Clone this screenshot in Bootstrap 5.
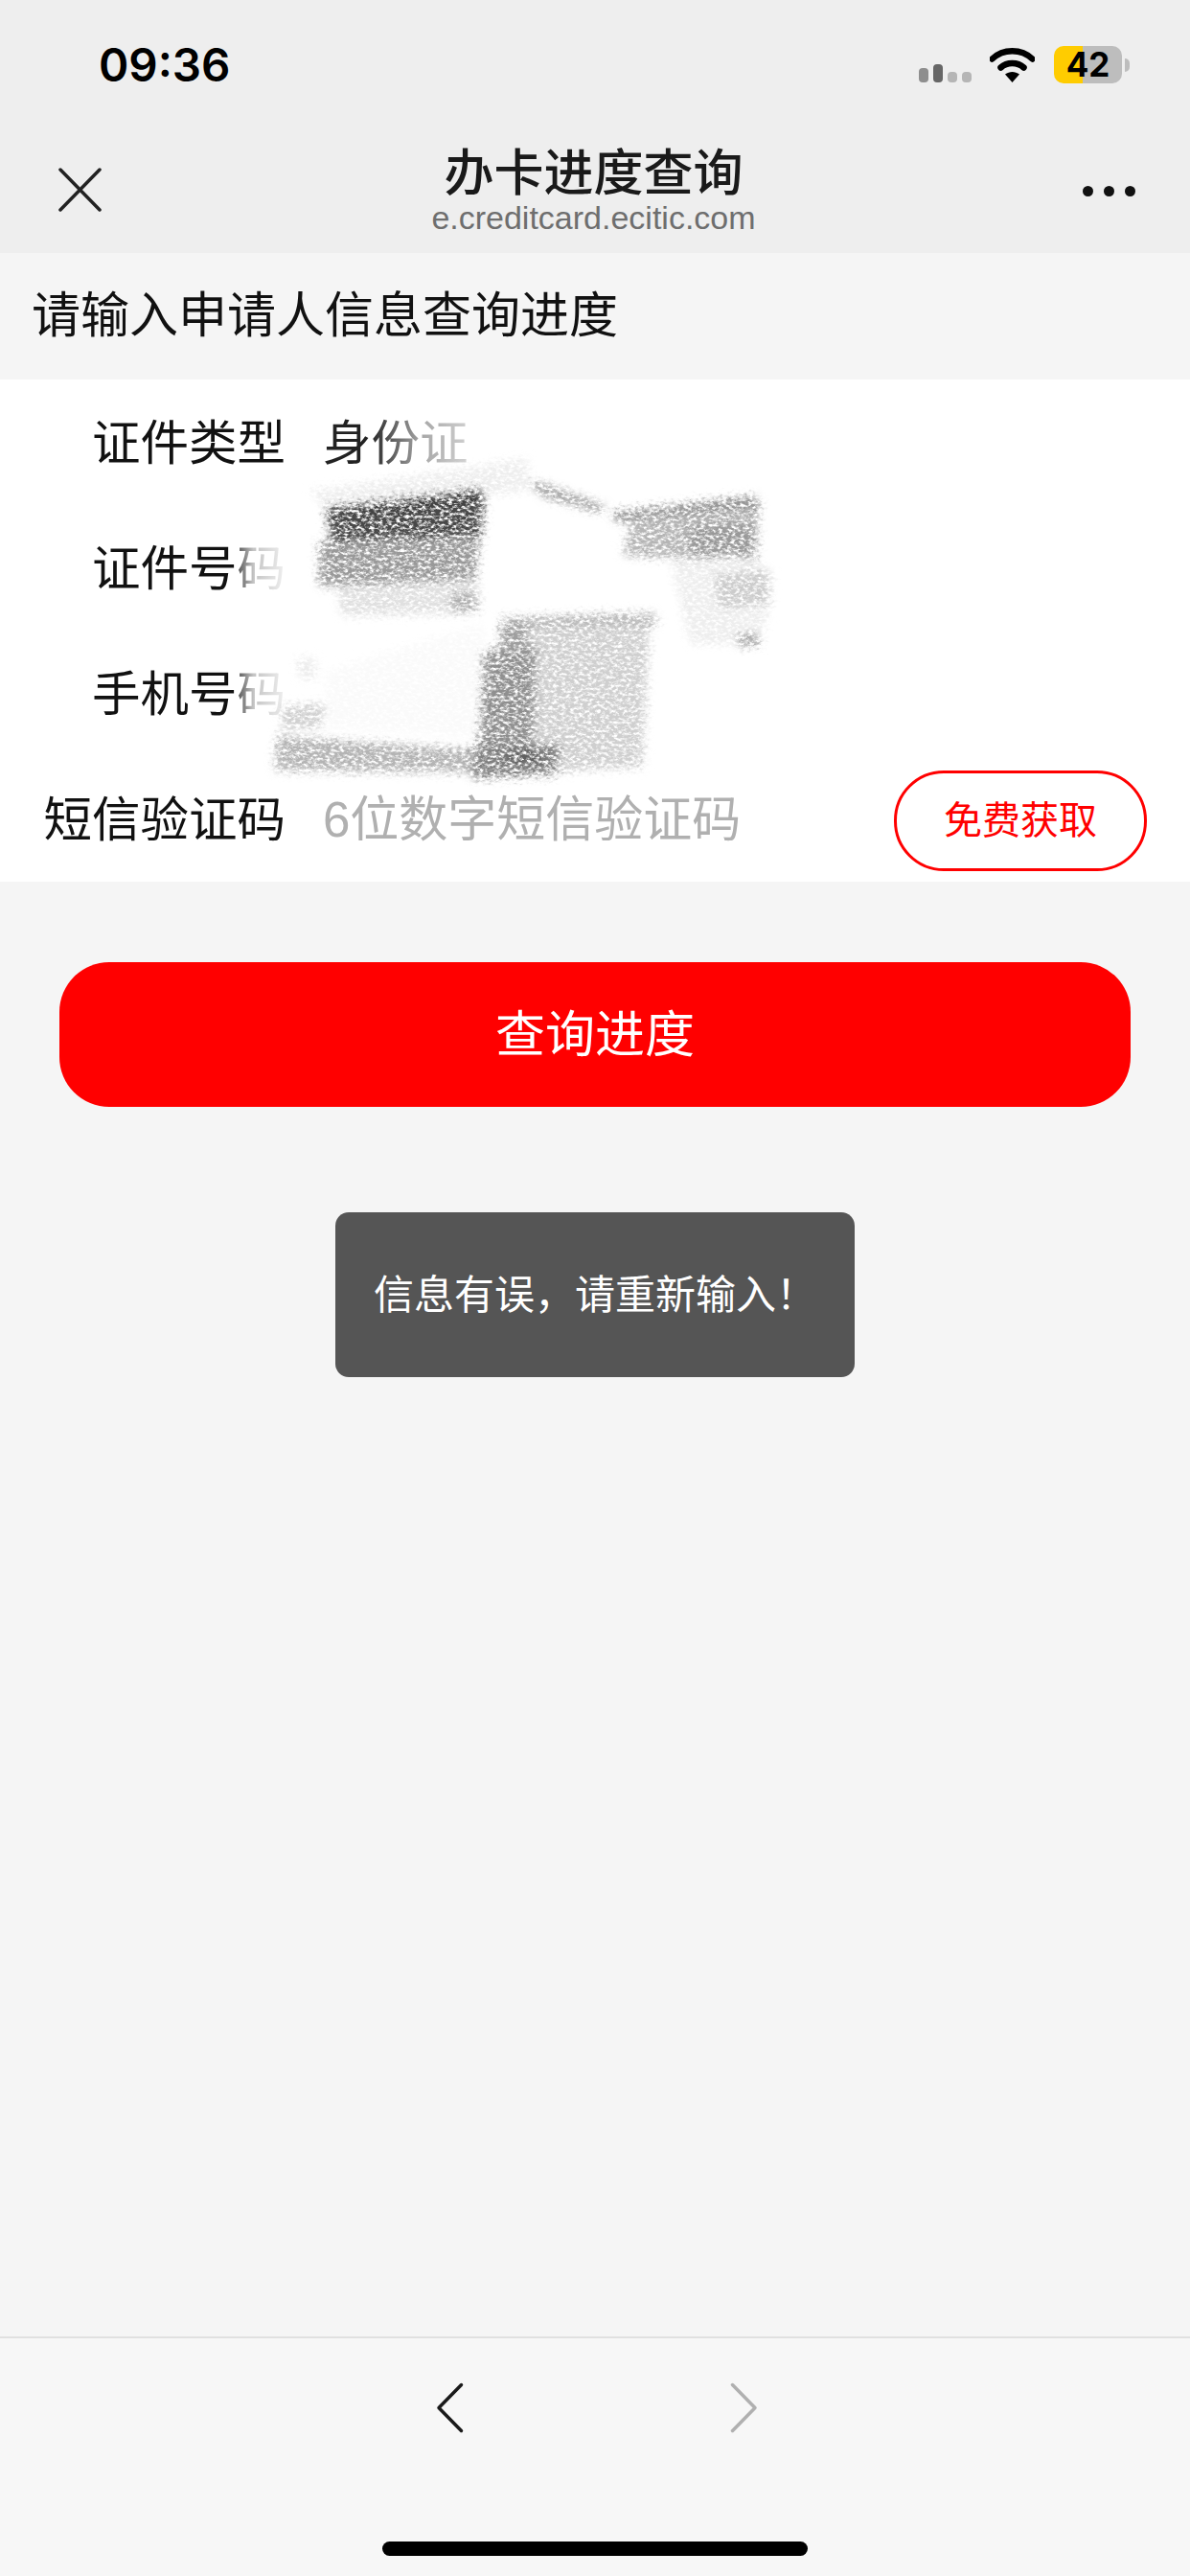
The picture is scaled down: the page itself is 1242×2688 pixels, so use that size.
<!DOCTYPE html>
<html lang="zh-CN">

<head>
    <meta charset="UTF-8">
    <meta name="viewport" content="width=device-width, initial-scale=1.0">
    <title>办卡进度查询</title>
    <link href="https://cdn.jsdelivr.net/npm/bootstrap@5.3.0/dist/css/bootstrap.min.css" rel="stylesheet">
    <style>
        body {
            width: 1242px;
            height: 2688px;
            overflow: hidden;
            background: #f5f5f5;
            font-family: "Liberation Sans", "Noto Sans CJK SC", sans-serif;
            color: #000;
        }

        .phone { height: 2688px; }

        .status-bar {
            height: 132px;
            background: #eee;
            padding: 0 63px 0 103px;
        }
        .clock {
            font: 600 47.500px/1 Inter, "Liberation Sans", sans-serif;
            margin-top: 3px;
        }
        .sig-bars { gap: 5px; height: 19px; width: 55px; margin: 21px 19px 0 0; }
        .sig-bars span { width: 10px; border-radius: 4px; }
        .sig-a { height: 15px; background: #8e8e8e; }
        .sig-b { height: 19px; background: #666; }
        .sig-c { height: 11px; background: #b5b5b5; }
        .wifi-icon { margin: 3px 20px 0 0; }
        .battery {
            width: 71px;
            height: 39px;
            border-radius: 10px;
            margin-top: 3px;
            background: linear-gradient(90deg, #fc0 30px, #bdbdbd 30px);
            font: 700 35px/39px Inter, "Liberation Sans", sans-serif;
            text-align: center;
        }
        .battery-nub { width: 5px; height: 14px; background: #bdbdbd; border-radius: 0 7px 7px 0; margin: 3px 0 0 3px; }

        .title-bar {
            height: 132px;
            background: #eee;
            padding: 0 57px 0 61px;
        }
        .title-side { width: 124px; }
        .title-middle { margin-right: 7px; }
        .page-title { font-size: 52px; font-weight: 500; line-height: 56px; color: #1a1a1a; margin-top: 2px; }
        .page-url { font-size: 34px; line-height: 36px; color: #6e6e6e; }
        .more-dots { gap: 11px; margin-top: 2px; }
        .more-dots span { width: 11px; height: 11px; border-radius: 50%; background: #111; }

        .form-hint { height: 132px; padding-left: 33px; font-size: 51px; color: #111; }

        .form-box { background: #fff; }
        .form-line { height: 131px; font-size: 50.500px; padding-top: 3px; }
        .form-label-text { width: 298px; text-align: right; flex-shrink: 0; color: #111; }
        .form-value { margin-left: 39px; color: #222; }
        .form-placeholder { margin-left: 39px; color: #b0b0b0; font-size: 51px; }
        .btn-code {
            width: 264px;
            height: 105px;
            margin-left: auto;
            margin-right: 45px;
            border: 3px solid #f00;
            border-radius: 52px;
            color: #f00;
            background: #fff;
            font-size: 40px;
        }

        .smudge { position: absolute; left: 0; top: 0; pointer-events: none; }

        .btn-query {
            display: block;
            width: 1118px;
            height: 151px;
            margin: 84px 0 0 62px;
            border: 0;
            border-radius: 52px;
            background: #f00;
            color: #fff;
            font-size: 52px;
        }
        .btn-query:hover { background: #f00; color: #fff; }

        .toast-msg {
            width: 542px;
            height: 172px;
            margin: 110px 0 0 350px;
            background: #555;
            border-radius: 14px;
            color: #fff;
            font-size: 42px;
            padding-left: 40px;
        }

        .bottom-bar {
            height: 250px;
            background: #f7f7f7;
            border-top: 2px solid #e0e0e0;
        }
        .nav-arrows { padding: 46px 0 0 454px; gap: 274px; }
        .home-line { width: 444px; height: 15px; border-radius: 8px; background: #000; margin: 113px auto 0; }
    </style>
</head>

<body>
    <div class="phone d-flex flex-column position-relative">

        <div class="status-bar d-flex align-items-center justify-content-between">
            <div class="clock">09:36</div>
            <div class="d-flex align-items-center">
                <div class="sig-bars d-flex align-items-end">
                    <span class="sig-a"></span><span class="sig-b"></span><span class="sig-c"></span><span class="sig-c"></span>
                </div>
                <svg class="wifi-icon" width="47" height="36" viewBox="0 0 47 36">
                    <path d="M2.500 11.500C14 .5 33 .5 44.500 11.500" fill="none" stroke="#000" stroke-width="6.500" stroke-linecap="round"/>
                    <path d="M11.500 20.500C18 14.500 29 14.500 35.500 20.500" fill="none" stroke="#000" stroke-width="6.500" stroke-linecap="round"/>
                    <path d="M16 27.500C20.500 24 26.500 24 31 27.500L23.500 36Z" fill="#000"/>
                </svg>
                <div class="battery">42</div>
                <div class="battery-nub"></div>
            </div>
        </div>

        <div class="title-bar d-flex justify-content-between align-items-center">
            <div class="title-side">
                <svg class="d-block" width="45" height="46" viewBox="0 0 45 46">
                    <path d="M2 2L43 44M43 2L2 44" stroke="#222" stroke-width="3.500" stroke-linecap="round"/>
                </svg>
            </div>
            <div class="title-middle text-center">
                <div class="page-title">办卡进度查询</div>
                <div class="page-url">e.creditcard.ecitic.com</div>
            </div>
            <div class="title-side d-flex justify-content-end">
                <div class="more-dots d-flex">
                    <span></span><span></span><span></span>
                </div>
            </div>
        </div>

        <div class="form-hint d-flex align-items-center">请输入申请人信息查询进度</div>

        <div class="form-box position-relative">
            <div class="form-line d-flex align-items-center">
                <div class="form-label-text">证件类型</div>
                <div class="form-value">身份证</div>
            </div>
            <div class="form-line d-flex align-items-center">
                <div class="form-label-text">证件号码</div>
            </div>
            <div class="form-line d-flex align-items-center">
                <div class="form-label-text">手机号码</div>
            </div>
            <div class="form-line d-flex align-items-center">
                <div class="form-label-text">短信验证码</div>
                <div class="form-placeholder">6位数字短信验证码</div>
                <button class="btn btn-code d-flex align-items-center justify-content-center p-0">免费获取</button>
            </div>

            <!-- pencil scribble over the personal data -->
            <svg class="smudge" width="1242" height="524" viewBox="0 396 1242 524">
                <defs>
                    <filter id="pencil" x="-5%" y="-5%" width="110%" height="110%">
                        <feGaussianBlur in="SourceGraphic" stdDeviation="4" result="b"/>
                        <feTurbulence type="fractalNoise" baseFrequency="0.22 0.34" numOctaves="3" seed="7" result="n"/>
                        <feDisplacementMap in="b" in2="n" scale="14" result="d"/>
                        <feColorMatrix in="n" type="matrix" values="0 0 0 0 0  0 0 0 0 0  0 0 0 0 0  3.200 0 0 0 -.85" result="g"/>
                        <feComposite in="d" in2="g" operator="in"/>
                        <feGaussianBlur stdDeviation=".55"/>
                    </filter>
                    <filter id="soft"><feGaussianBlur stdDeviation="7"/></filter>
                    <linearGradient id="fadeText" x1="0" x2="1" y1="0" y2="0">
                        <stop offset="0" stop-color="#fff" stop-opacity="0"/>
                        <stop offset="0.5" stop-color="#fff" stop-opacity=".6"/>
                        <stop offset="1" stop-color="#fff" stop-opacity=".8"/>
                    </linearGradient>
                    <linearGradient id="fadeLabel" x1="0" x2="1" y1="0" y2="0">
                        <stop offset="0" stop-color="#fff" stop-opacity=".2"/>
                        <stop offset="0.35" stop-color="#fff" stop-opacity=".75"/>
                        <stop offset="1" stop-color="#fff" stop-opacity=".95"/>
                    </linearGradient>
                </defs>

                <rect x="385" y="425" width="108" height="75" fill="url(#fadeText)"/>
                <rect x="245" y="555" width="55" height="76" fill="url(#fadeLabel)"/>
                <rect x="245" y="688" width="55" height="76" fill="url(#fadeLabel)"/>
                <path d="M310 505L550 485L860 540L840 680L690 805L310 810Z" fill="#fff" filter="url(#soft)"/>

                <g filter="url(#pencil)">
                    <path d="M325 512L552 478L550 512L340 535Z" fill="#eee"/>
                    <path d="M340 700L505 650L508 770L340 760Z" fill="#fafafa"/>

                    <path d="M341 532L505 512L502 560L345 565Z" fill="#4a4a4a"/>
                    <path d="M341 530L505 510L504 522L342 538Z" fill="#333"/>
                    <path d="M345 552L495 545L495 552L345 562Z" fill="#444"/>
                    <path d="M333 566L501 558L496 605L333 612Z" fill="#999"/>
                    <path d="M353 612L499 606L498 640L356 642Z" fill="#e0e0e0"/>
                    <path d="M470 620L498 617L497 636L472 638Z" fill="#aaa"/>

                    <path d="M551 503L568 505L634 528L622 534L566 518Z" fill="#a0a0a0"/>
                    <path d="M640 535L790 518L792 530L642 545Z" fill="#888"/>
                    <path d="M661 540L792 530L788 585L650 580Z" fill="#b5b5b5"/>
                    <path d="M718 550L790 545L788 580L720 580Z" fill="#999"/>
                    <path d="M700 585L770 580L805 595L802 640L790 672L720 672Z" fill="#eee"/>
                    <path d="M745 600L802 595L802 630L750 635Z" fill="#ccc"/>
                    <path d="M770 664L792 662L792 672L770 674Z" fill="#888"/>

                    <path d="M523 645L685 640L684 652L525 656Z" fill="#b0b0b0"/>
                    <path d="M555 654L678 650L670 800L555 806Z" fill="#cfcfcf"/>
                    <path d="M505 680L560 672L555 806L498 812Z" fill="#8f8f8f"/>
                    <path d="M522 655L552 653L553 680L522 682Z" fill="#9f9f9f"/>
                    <path d="M492 780L585 776L580 808L492 812Z" fill="#808080"/>
                    <path d="M530 785L565 784L562 795L530 796Z" fill="#555"/>

                    <path d="M290 768L495 782L492 806L286 804Z" fill="#b4b4b4"/>
                    <path d="M294 738L340 734L335 758L294 762Z" fill="#d0d0d0"/>
                    <path d="M310 688L330 686L330 708L312 708Z" fill="#ececec"/>
                </g>
            </svg>
        </div>

        <button class="btn btn-query">查询进度</button>

        <div class="toast-msg d-flex align-items-center">信息有误，请重新输入！</div>

        <div class="bottom-bar mt-auto">
            <div class="nav-arrows d-flex">
                <svg width="32" height="53" viewBox="0 0 32 53">
                    <path d="M27.500 2.500L4 26.500L27.500 50.500" fill="none" stroke="#1a1a1a" stroke-width="3.500" stroke-linecap="round" stroke-linejoin="round"/>
                </svg>
                <svg width="32" height="53" viewBox="0 0 32 53">
                    <path d="M4.500 2.500L28 26.500L4.500 50.500" fill="none" stroke="#b0b0b0" stroke-width="3.500" stroke-linecap="round" stroke-linejoin="round"/>
                </svg>
            </div>
            <div class="home-line"></div>
        </div>
    </div>

    <script src="https://cdn.jsdelivr.net/npm/bootstrap@5.3.0/dist/js/bootstrap.bundle.min.js"></script>
</body>

</html>
